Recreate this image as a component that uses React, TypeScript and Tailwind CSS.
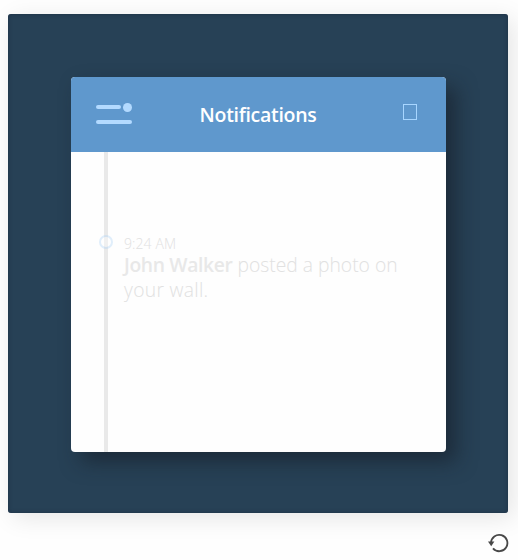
import React from "react";

function MenuIcon() {
  return (
    <div className="flex h-[21px] w-9 flex-col justify-between pt-px">
      <div className="flex items-start justify-between">
        <span className="mt-px h-1 w-[25px] rounded-full bg-[#b3daff]" />
        <span className="-mt-px size-[9px] rounded-full bg-[#b3daff]" />
      </div>
      <span className="h-1 w-9 rounded-full bg-[#b3daff]" />
    </div>
  );
}

function Header() {
  return (
    <header className="grid h-[75px] grid-cols-[104px_1fr_104px] items-center bg-[#5f98cd]">
      <div className="pb-[2px] pl-[25px]">
        <MenuIcon />
      </div>
      <h1 className="pr-px text-center text-[19.5px] leading-[25px] font-semibold tracking-[-0.3px] text-white">Notifications</h1>
      <div className="flex justify-end pr-[29px] pb-[5px]">
        <span className="h-4 w-[14px] border border-[#a8d6ff]" />
      </div>
    </header>
  );
}

function Timeline() {
  return (
    <main className="relative h-[300px] pl-[53px] pt-[82px]">
      <span className="absolute top-0 left-[33px] h-full w-1 bg-[#e9e9e9]" />
      <span className="absolute top-[83px] left-[28px] size-[14px] rounded-full border-2 border-[#a9d2f8] bg-white opacity-35" />
      <div className="text-[#e1e1e1]">
        <time className="block h-[18px] text-[14px] leading-[20px] font-light tracking-[0.1px]">9:24 AM</time>
        <p className="w-[290px] text-[19.3px] leading-[25px] font-light">
          <b className="text-[19.3px] font-semibold tracking-[-0.35px] text-[#e8e8e8]">John Walker</b> posted a photo on{" "}
          <span className="tracking-[0.3px]">your wall.</span>
        </p>
      </div>
    </main>
  );
}

export default function App() {
  return (
    <div className="h-[560px] w-[518px] overflow-hidden bg-[#fefefe] pl-2 pt-[14px] font-['Open_Sans',sans-serif]">
      <section className="h-[499px] w-[500px] rounded-[3px] bg-[#274156] pl-[63px] pt-[63px] shadow-[5px_5px_25px_rgba(0,0,0,0.1),inset_0_0_4px_#1d3045]">
        <div className="size-[375px] overflow-hidden rounded-[4px] bg-[#fefefe] shadow-[10px_10px_20px_rgba(20,25,35,0.55)]">
          <Header />
          <Timeline />
        </div>
      </section>
      <div className="flex justify-end pt-[19px] pr-[9px]">
        <svg width="22" height="22" viewBox="0 0 22 22" fill="none">
          <path d="M4 11a8.2 8.2 0 1 1 2 5.4" stroke="#484848" strokeWidth="1.8" />
          <path d="M1 9.6h6.4l-3.2 4.6z" fill="#484848" />
        </svg>
      </div>
    </div>
  );
}
